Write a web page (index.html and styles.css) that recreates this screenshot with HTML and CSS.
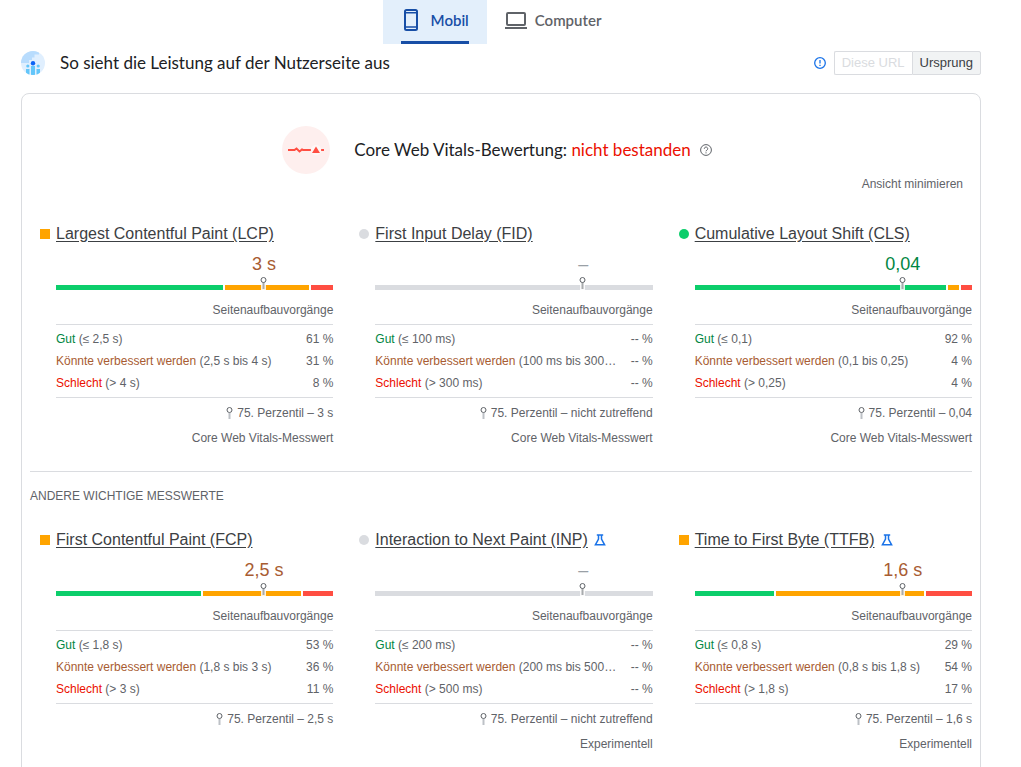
FILE: index.html
```html
<!DOCTYPE html>
<html lang="de">
<head>
<meta charset="utf-8">
<title>PageSpeed Insights</title>
<link rel="stylesheet" href="styles.css">
</head>
<body>
<svg class="sprite" aria-hidden="true">
  <symbol id="pin" viewBox="0 0 7 12">
    <path d="M2.500 6h2v6h-2z" fill="#bdc1c6"/>
    <circle cx="3.5" cy="3" r="2.500" fill="#fff" stroke="#5f6368"/>
  </symbol>
  <symbol id="bar-pin" viewBox="0 0 7 14">
    <path d="M1 7h5v7H1z" fill="#fff" fill-opacity=".85"/>
    <path d="M2.500 6h2v7h-2z" fill="#a8abad"/>
    <circle cx="3.5" cy="4" r="2.500" fill="#fff" stroke="#5f6368"/>
  </symbol>
  <symbol id="flask" viewBox="0 0 12 12">
    <path d="M2.800 1h6.400M4.500 1v4L1.400 10.800h9.200L7.500 5V1" fill="none" stroke="#1a73e8" stroke-width="1.500"/>
  </symbol>
</svg>
<div class="page">
  <nav class="tabs" role="tablist">
    <button class="tab tab--active" role="tab" aria-selected="true">
      <svg class="tab__icon" viewBox="0 0 22 24" aria-hidden="true"><g fill="none" stroke="currentColor" stroke-width="2"><rect x="4" y="2" width="12" height="20" rx="1.5"/><path d="M4 4.700h12M4 19h12" stroke-width="1.600"/></g></svg>
      <span>Mobil</span>
    </button>
    <button class="tab" role="tab" aria-selected="false">
      <svg class="tab__icon" viewBox="0 0 22 24" aria-hidden="true"><g fill="none" stroke="currentColor" stroke-width="2"><rect x="2" y="5" width="18" height="12" rx="1"/><path d="M0 20h22"/></g></svg>
      <span>Computer</span>
    </button>
  </nav>

  <header class="heading">
    <svg class="heading__icon" viewBox="0 0 24 24" aria-hidden="true">
      <clipPath id="disc"><circle cx="12" cy="12" r="12"/></clipPath>
      <g clip-path="url(#disc)">
        <path d="M0 0h24v24H0z" fill="#e0effe"/>
        <path d="M0 0h18v3.500h-4.500v3H11v2.500H8v3H0z" fill="#b8dcfd"/>
        <g fill="#63c6fa"><path d="M10 15h4v9h-4zM5 18h3.500v6H5zM15.500 18H19v6h-3.500z"/><circle cx="6.800" cy="15" r="1.600"/><circle cx="17.200" cy="15" r="1.600"/></g>
        <circle cx="12" cy="12.300" r="2.200" fill="#0b63f6"/>
      </g>
    </svg>
    <h1 class="heading__title">So sieht die Leistung auf der Nutzerseite aus</h1>
    <svg class="heading__info" viewBox="0 0 12 12" aria-hidden="true"><circle cx="6" cy="6" r="5.300" fill="none" stroke="#1a73e8" stroke-width="1.300"/><path d="M6 3v3.500M6 7.700v1.300" stroke="#1a73e8" stroke-width="1.300"/></svg>
    <div class="switch">
      <button class="switch__item" disabled>Diese URL</button>
      <button class="switch__item switch__item--on">Ursprung</button>
    </div>
  </header>

  <main class="card">
    <div class="verdict">
      <svg class="verdict__icon" viewBox="0 0 48 48" aria-hidden="true">
        <circle cx="24" cy="24" r="24" fill="#feefee"/>
        <path d="M6 24h6.500l2-1.500 3 3 2.500-2 1 .5h21" fill="none" stroke="#ff4e42" stroke-width="2"/>
        <circle cx="34" cy="24" r="5.200" fill="#fff7f6"/>
        <path d="M34 20.500l4 6.500h-8z" fill="#ff4e42"/>
      </svg>
      <h2 class="verdict__title">Core Web Vitals-Bewertung: <span class="bad">nicht bestanden</span></h2>
      <svg class="verdict__help" viewBox="0 0 12 12" aria-hidden="true"><circle cx="6" cy="6" r="5.400" fill="none" stroke="#5f6368"/><path d="M4.300 4.800a1.700 1.700 0 1 1 2.700 1.300Q6 6.600 6 7.300M6 8.300v1.100" fill="none" stroke="#5f6368"/></svg>
    </div>
    <div class="collapse"><button class="collapse__button">Ansicht minimieren</button></div>

    <section class="metrics">
      <article class="metric">
        <h3 class="metric__title metric__title--average"><a href="#lcp">Largest Contentful Paint (LCP)</a></h3>
        <div class="metric__value average">3 s</div>
        <div class="bar"><i class="bar__part bar__part--good" style="flex-grow:61"></i><i class="bar__part bar__part--average" style="flex-grow:31"></i><i class="bar__part bar__part--bad" style="flex-grow:8"></i><svg class="bar__pin" aria-hidden="true"><use href="#bar-pin"/></svg></div>
        <table class="shares">
          <caption>Seitenaufbauvorgänge</caption>
          <tr><th><span class="good">Gut</span> (≤ 2,5 s)</th><td>61 %</td></tr>
          <tr><th><span class="average">Könnte verbessert werden</span> (2,5 s bis 4 s)</th><td>31 %</td></tr>
          <tr><th><span class="bad">Schlecht</span> (&gt; 4 s)</th><td>8 %</td></tr>
        </table>
        <p class="note"><svg class="note__pin" aria-hidden="true"><use href="#pin"/></svg>75. Perzentil – 3 s</p>
        <p class="note">Core Web Vitals-Messwert</p>
      </article>

      <article class="metric">
        <h3 class="metric__title metric__title--none"><a href="#fid">First Input Delay (FID)</a></h3>
        <div class="metric__value none">–</div>
        <div class="bar"><i class="bar__part" style="flex-grow:100"></i><svg class="bar__pin" aria-hidden="true"><use href="#bar-pin"/></svg></div>
        <table class="shares">
          <caption>Seitenaufbauvorgänge</caption>
          <tr><th><span class="good">Gut</span> (≤ 100 ms)</th><td>-- %</td></tr>
          <tr><th><span class="average">Könnte verbessert werden</span> (100 ms bis 300…</th><td>-- %</td></tr>
          <tr><th><span class="bad">Schlecht</span> (&gt; 300 ms)</th><td>-- %</td></tr>
        </table>
        <p class="note"><svg class="note__pin" aria-hidden="true"><use href="#pin"/></svg>75. Perzentil – nicht zutreffend</p>
        <p class="note">Core Web Vitals-Messwert</p>
      </article>

      <article class="metric">
        <h3 class="metric__title metric__title--good"><a href="#cls">Cumulative Layout Shift (CLS)</a></h3>
        <div class="metric__value good">0,04</div>
        <div class="bar"><i class="bar__part bar__part--good" style="flex-grow:92"></i><i class="bar__part bar__part--average" style="flex-grow:4"></i><i class="bar__part bar__part--bad" style="flex-grow:4"></i><svg class="bar__pin" aria-hidden="true"><use href="#bar-pin"/></svg></div>
        <table class="shares">
          <caption>Seitenaufbauvorgänge</caption>
          <tr><th><span class="good">Gut</span> (≤ 0,1)</th><td>92 %</td></tr>
          <tr><th><span class="average">Könnte verbessert werden</span> (0,1 bis 0,25)</th><td>4 %</td></tr>
          <tr><th><span class="bad">Schlecht</span> (&gt; 0,25)</th><td>4 %</td></tr>
        </table>
        <p class="note"><svg class="note__pin" aria-hidden="true"><use href="#pin"/></svg>75. Perzentil – 0,04</p>
        <p class="note">Core Web Vitals-Messwert</p>
      </article>
    </section>

    <h2 class="subhead">Andere wichtige Messwerte</h2>

    <section class="metrics">
      <article class="metric">
        <h3 class="metric__title metric__title--average"><a href="#fcp">First Contentful Paint (FCP)</a></h3>
        <div class="metric__value average">2,5 s</div>
        <div class="bar"><i class="bar__part bar__part--good" style="flex-grow:53"></i><i class="bar__part bar__part--average" style="flex-grow:36"></i><i class="bar__part bar__part--bad" style="flex-grow:11"></i><svg class="bar__pin" aria-hidden="true"><use href="#bar-pin"/></svg></div>
        <table class="shares">
          <caption>Seitenaufbauvorgänge</caption>
          <tr><th><span class="good">Gut</span> (≤ 1,8 s)</th><td>53 %</td></tr>
          <tr><th><span class="average">Könnte verbessert werden</span> (1,8 s bis 3 s)</th><td>36 %</td></tr>
          <tr><th><span class="bad">Schlecht</span> (&gt; 3 s)</th><td>11 %</td></tr>
        </table>
        <p class="note"><svg class="note__pin" aria-hidden="true"><use href="#pin"/></svg>75. Perzentil – 2,5 s</p>
      </article>

      <article class="metric">
        <h3 class="metric__title metric__title--none"><a href="#inp">Interaction to Next Paint (INP)</a><svg class="metric__flask" aria-hidden="true"><use href="#flask"/></svg></h3>
        <div class="metric__value none">–</div>
        <div class="bar"><i class="bar__part" style="flex-grow:100"></i><svg class="bar__pin" aria-hidden="true"><use href="#bar-pin"/></svg></div>
        <table class="shares">
          <caption>Seitenaufbauvorgänge</caption>
          <tr><th><span class="good">Gut</span> (≤ 200 ms)</th><td>-- %</td></tr>
          <tr><th><span class="average">Könnte verbessert werden</span> (200 ms bis 500…</th><td>-- %</td></tr>
          <tr><th><span class="bad">Schlecht</span> (&gt; 500 ms)</th><td>-- %</td></tr>
        </table>
        <p class="note"><svg class="note__pin" aria-hidden="true"><use href="#pin"/></svg>75. Perzentil – nicht zutreffend</p>
        <p class="note">Experimentell</p>
      </article>

      <article class="metric">
        <h3 class="metric__title metric__title--average"><a href="#ttfb">Time to First Byte (TTFB)</a><svg class="metric__flask" aria-hidden="true"><use href="#flask"/></svg></h3>
        <div class="metric__value average">1,6 s</div>
        <div class="bar"><i class="bar__part bar__part--good" style="flex-grow:29"></i><i class="bar__part bar__part--average" style="flex-grow:54"></i><i class="bar__part bar__part--bad" style="flex-grow:17"></i><svg class="bar__pin" aria-hidden="true"><use href="#bar-pin"/></svg></div>
        <table class="shares">
          <caption>Seitenaufbauvorgänge</caption>
          <tr><th><span class="good">Gut</span> (≤ 0,8 s)</th><td>29 %</td></tr>
          <tr><th><span class="average">Könnte verbessert werden</span> (0,8 s bis 1,8 s)</th><td>54 %</td></tr>
          <tr><th><span class="bad">Schlecht</span> (&gt; 1,8 s)</th><td>17 %</td></tr>
        </table>
        <p class="note"><svg class="note__pin" aria-hidden="true"><use href="#pin"/></svg>75. Perzentil – 1,6 s</p>
        <p class="note">Experimentell</p>
      </article>
    </section>
  </main>
</div>
</body>
</html>
```
FILE: styles.css
```css
* { box-sizing: border-box; }

html { scrollbar-width: none; }

body {
  margin: 0;
  background: #fff;
  color: #5f6368;
  font: 12px/16px "Liberation Sans", Arial, sans-serif;
}

h1, h2, h3, p { margin: 0; font-weight: 400; }

button { font: inherit; color: inherit; cursor: pointer; }

.sprite { display: none; }

.page { padding: 0 40px 0 21px; }

.good { color: #018642; }
.average { color: #a85c32; }
.bad { color: #eb0f00; }
.none { color: #9aa0a6; }

/* Device tabs */
.tabs { display: flex; justify-content: center; }

.tab {
  display: flex;
  align-items: center;
  gap: 8px;
  height: 44px;
  padding: 0 18px 5px;
  border: 0;
  background: none;
  font: 600 15px/20px Lato, sans-serif;
}

.tab--active {
  background: linear-gradient(#174ea6, #174ea6) center bottom / calc(100% - 36px) 3px no-repeat, #e3effb;
  color: #174ea6;
}

.tab__icon { width: 22px; height: 24px; }

/* Section heading */
.heading {
  display: flex;
  align-items: center;
  margin-bottom: 18px;
  padding-top: 7px;
}

.heading__icon { width: 24px; height: 24px; margin-right: 15px; }

.heading__title {
  flex: 1;
  color: #202124;
  font: 17px/24px Lato, sans-serif;
}

.heading__info { width: 12px; height: 12px; margin-right: 8px; }

.switch { display: flex; }

.switch__item {
  height: 24px;
  padding: 0 7px;
  border: 1px solid #dadce0;
  border-radius: 2px 0 0 2px;
  background: #fff;
  font-size: 13px;
}

.switch__item:disabled { border-right: 0; color: #dadce0; cursor: default; }

.switch__item--on {
  border-radius: 0 2px 2px 0;
  background: #f1f3f4;
  color: #3c4043;
}

/* Report card */
.card {
  padding: 32px 8px 24px;
  border: 1px solid #dadce0;
  border-radius: 8px;
}

.verdict { display: flex; align-items: center; justify-content: center; padding-right: 8px; }
.verdict__icon { width: 48px; height: 48px; margin-right: 24px; }
.verdict__title { color: #202124; font: 17px/24px Lato, sans-serif; }
.verdict__help { width: 12px; height: 12px; margin-left: 9px; }

.collapse { display: flex; justify-content: flex-end; padding: 2px 9px 0; }
.collapse__button { padding: 0; border: 0; background: none; }

.metrics {
  display: grid;
  grid-template-columns: repeat(3, 1fr);
  gap: 16px;
  padding-top: 32px;
}

.metric { padding-left: 26px; }

.metric__title {
  display: flex;
  align-items: center;
  margin-left: -16px;
  font-size: 16px;
  line-height: 20px;
}

.metric__title::before {
  content: "";
  width: 10px;
  height: 10px;
  margin-right: 6px;
  border-radius: 50%;
  background: #dadce0;
}

.metric__title--good::before { background: #0cce6b; }
.metric__title--average::before { border-radius: 0; background: #ffa400; }
.metric__title a { color: #3c4043; text-underline-offset: 2px; }
.metric__flask { width: 12px; height: 12px; margin-left: 6px; }

.metric__value {
  width: 50%;
  margin: 10px 0 11px auto;
  font-size: 18px;
  line-height: 20px;
  text-align: center;
}

/* Distribution bar */
.bar { position: relative; display: flex; gap: 2px; height: 5px; }
.bar__part { flex-basis: 0; background: #dadce0; }
.bar__part--good { background: #0cce6b; }
.bar__part--average { background: #ffa400; }
.bar__part--bad { background: #ff4e42; }

.bar__pin {
  position: absolute;
  bottom: 0;
  left: 75%;
  width: 7px;
  height: 14px;
  margin-left: -4px;
}

/* Share table */
.shares { width: 100%; margin-top: 12px; border-spacing: 0; }
.shares caption { padding-bottom: 6px; text-align: right; }

.shares th, .shares td { height: 22px; padding: 0; font-weight: 400; white-space: nowrap; }

.shares th {
  width: 100%;
  max-width: 0;
  overflow: hidden;
  text-align: left;
  text-overflow: ellipsis;
}

.shares td { text-align: right; }

.shares tbody tr:first-child > * { height: 26px; padding-top: 3px; border-top: 1px solid #dadce0; }
.shares tbody tr:last-child > * { height: 26px; padding-bottom: 3px; border-bottom: 1px solid #dadce0; }

.note { margin-top: 9px; text-align: right; }
.shares + .note { margin-top: 7px; }
.note__pin { width: 7px; height: 12px; margin-right: 4px; vertical-align: -2px; }

.subhead {
  margin-top: 25px;
  padding-top: 16px;
  border-top: 1px solid #dadce0;
  font-size: 12px;
  line-height: 16px;
  text-transform: uppercase;
}

.subhead + .metrics { padding-top: 26px; }
```
